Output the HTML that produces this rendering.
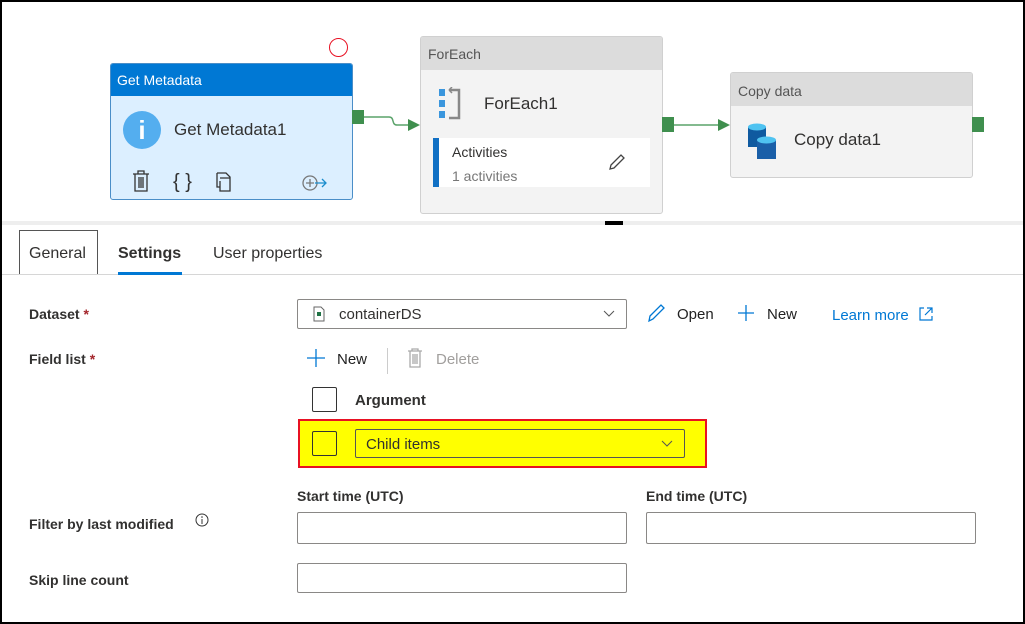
<!DOCTYPE html>
<html><head><style>
*{box-sizing:border-box;margin:0;padding:0}
body{width:1025px;height:624px;position:relative;background:#fff;font-family:"Liberation Sans",sans-serif;color:#323130;overflow:hidden}
.a{position:absolute}
.frame{left:0;top:0;width:1025px;height:624px;border:2px solid #000;z-index:10;pointer-events:none}
.lbl{font-size:14px;font-weight:bold;color:#323130}
.in{border:1px solid #8a8886;border-radius:2px;background:#fff}
</style></head><body>
<div class="a frame"></div>

<div class="a" style="left:329px;top:38px;width:19px;height:19px;border:1.5px solid #e81123;border-radius:50%"></div>

<div class="a" style="left:110px;top:63px;width:243px;height:137px;border:1px solid #4a8ec8;border-radius:3px;background:#dcefff;overflow:hidden">
  <div style="height:32px;background:#0078d4;color:#fff;font-size:14px;padding:8px 6px">Get Metadata</div>
  <div class="a" style="left:12px;top:47px;width:38px;height:38px;border-radius:50%;background:#54aeef;color:#fff;font-weight:bold;font-size:26px;text-align:center;line-height:38px">i</div>
  <div class="a" style="left:63px;top:56px;font-size:17px">Get Metadata1</div>
  <svg class="a" style="left:20px;top:105px" width="200" height="24" fill="none" stroke="#333" stroke-width="1.3">
    <path d="M2 5h16M7 5V2h6v3M4 5v17h12V5M8 8v11M10 8v11M12 8v11"/>
    <text x="42" y="19" font-size="20" fill="#333" stroke="none" font-family="Liberation Sans">{ }</text>
    <path d="M86 4h9l4 4v14h-10V12"/><path d="M86 4v14h3M89 9h10"/>
    <circle cx="179" cy="14" r="7" stroke="#777"/><path d="M175 14h8M179 10v8" stroke="#777"/><path d="M184 14h11M191 10l4 4-4 4" stroke="#1a8ccc"/>
  </svg>
</div>
<div class="a" style="left:352px;top:110px;width:12px;height:14px;background:#3f8f4e"></div>
<svg class="a" style="left:364px;top:110px" width="60" height="25"><path d="M0 7h25c6 0 2 8 8 8h14" stroke="#5aa36a" stroke-width="1.5" fill="none"/><path d="M44 9l12 6-12 6z" fill="#3f8f4e"/></svg>

<div class="a" style="left:420px;top:36px;width:243px;height:178px;border:1px solid #d0d0d0;border-radius:3px;background:#f3f3f3;overflow:hidden">
  <div style="height:33px;background:#dcdcdc;color:#555;font-size:14px;padding:9px 7px">ForEach</div>
  <svg class="a" style="left:16px;top:50px" width="30" height="34"><rect x="2" y="2" width="6" height="7" fill="#3a96dd"/><rect x="2" y="13" width="6" height="7" fill="#3a96dd"/><rect x="2" y="24" width="6" height="7" fill="#3a96dd"/><path d="M13 3h9v28h-10" stroke="#888" stroke-width="2.5" fill="none"/><path d="M12 3l3-3M12 3l3 3" stroke="#888" stroke-width="1.5"/></svg>
  <div class="a" style="left:63px;top:57px;font-size:17px">ForEach1</div>
  <div class="a" style="left:12px;top:101px;width:217px;height:49px;background:#fff;border-left:6px solid #1170c4">
    <div style="position:absolute;left:13px;top:6px;font-size:14px">Activities</div>
    <div style="position:absolute;left:13px;top:30px;font-size:14px;color:#777">1 activities</div>
    <svg style="position:absolute;left:168px;top:14px" width="20" height="20" fill="none" stroke="#444" stroke-width="1.3"><path d="M3 17l1-4 10-10 3 3-10 10z"/></svg>
  </div>
</div>
<div class="a" style="left:662px;top:117px;width:12px;height:15px;background:#3f8f4e"></div>
<svg class="a" style="left:674px;top:115px" width="60" height="20"><path d="M0 10h44" stroke="#5aa36a" stroke-width="1.5"/><path d="M44 4l12 6-12 6z" fill="#3f8f4e"/></svg>

<div class="a" style="left:730px;top:72px;width:243px;height:106px;border:1px solid #d0d0d0;border-radius:3px;background:#f3f3f3;overflow:hidden">
  <div style="height:33px;background:#dcdcdc;color:#555;font-size:14px;padding:10px 7px">Copy data</div>
  <svg class="a" style="left:15px;top:48px" width="36" height="40"><rect x="2" y="6" width="18" height="20" fill="#0f5aa0"/><ellipse cx="11" cy="6" rx="9" ry="3.5" fill="#4fc3f1"/><rect x="11" y="19" width="19" height="19" fill="#1a5fa8"/><ellipse cx="20.5" cy="19" rx="9.5" ry="3.5" fill="#4fc3f1"/></svg>
  <div class="a" style="left:63px;top:57px;font-size:17px">Copy data1</div>
</div>
<div class="a" style="left:972px;top:117px;width:12px;height:15px;background:#3f8f4e"></div>

<div class="a" style="left:2px;top:221px;width:1021px;height:4px;background:#eeeeee"></div>
<div class="a" style="left:605px;top:221px;width:18px;height:4px;background:#000"></div>

<div class="a" style="left:19px;top:230px;width:79px;height:45px;border:1px solid #555"></div>
<div class="a" style="left:2px;top:274px;width:1021px;height:1px;background:#d6d6d6"></div>
<div class="a" style="left:29px;top:245px;font-size:16px">General</div>
<div class="a" style="left:118px;top:245px;font-size:16px;font-weight:bold">Settings</div>
<div class="a" style="left:118px;top:272px;width:64px;height:3px;background:#0078d4"></div>
<div class="a" style="left:213px;top:245px;font-size:16px">User properties</div>

<div class="a lbl" style="left:29px;top:306px">Dataset <span style="color:#a4262c">*</span></div>
<div class="a in" style="left:297px;top:299px;width:330px;height:30px"></div>
<svg class="a" style="left:313px;top:306px" width="12" height="16"><path d="M1 1h7l3 3v11H1z" fill="#fff" stroke="#666"/><rect x="4" y="6" width="4" height="4" fill="#217346"/></svg>
<div class="a" style="left:339px;top:306px;font-size:15px">containerDS</div>
<svg class="a" style="left:603px;top:310px" width="12" height="8"><path d="M1 1l5 5 5-5" stroke="#555" fill="none"/></svg>
<svg class="a" style="left:647px;top:303px" width="20" height="20" fill="none" stroke="#0078d4" stroke-width="1.3"><path d="M2 18l1-5 11-11 3 3-11 11z"/></svg>
<div class="a" style="left:677px;top:306px;font-size:15px;color:#222">Open</div>
<svg class="a" style="left:737px;top:304px" width="18" height="18"><path d="M9 1v16M1 9h16" stroke="#0078d4" stroke-width="1.3"/></svg>
<div class="a" style="left:767px;top:306px;font-size:15px;color:#222">New</div>
<div class="a" style="left:832px;top:307px;font-size:15px;color:#0078d4">Learn more</div>
<svg class="a" style="left:918px;top:306px" width="16" height="16" fill="none" stroke="#0078d4" stroke-width="1.2"><path d="M6 2H2v12h12v-4M9 2h5v5M14 2L7 9"/></svg>

<div class="a lbl" style="left:29px;top:351px">Field list <span style="color:#a4262c">*</span></div>
<svg class="a" style="left:306px;top:348px" width="20" height="20"><path d="M10 1v18M1 10h18" stroke="#0078d4" stroke-width="1.3"/></svg>
<div class="a" style="left:337px;top:351px;font-size:15px;color:#222">New</div>
<div class="a" style="left:387px;top:348px;width:1px;height:26px;background:#ccc"></div>
<svg class="a" style="left:406px;top:347px" width="18" height="22" fill="none" stroke="#aaa" stroke-width="1.3"><path d="M2 4h14M6 4V2h6v2M4 4v16h10V4M7 7v10M9 7v10M11 7v10"/></svg>
<div class="a" style="left:436px;top:351px;font-size:15px;color:#a19f9d">Delete</div>

<div class="a" style="left:312px;top:387px;width:25px;height:25px;border:1px solid #333;border-radius:2px"></div>
<div class="a lbl" style="left:355px;top:392px;font-size:15px">Argument</div>

<div class="a" style="left:298px;top:419px;width:409px;height:49px;border:2px solid #e81123;background:#ffff00"></div>
<div class="a" style="left:312px;top:431px;width:25px;height:25px;border:1px solid #333;border-radius:2px"></div>
<div class="a" style="left:355px;top:429px;width:330px;height:29px;border:1px solid #555;border-radius:2px"></div>
<div class="a" style="left:366px;top:436px;font-size:15px">Child items</div>
<svg class="a" style="left:661px;top:440px" width="12" height="8"><path d="M1 1l5 5 5-5" stroke="#555" fill="none"/></svg>

<div class="a lbl" style="left:297px;top:488px;font-size:14px">Start time (UTC)</div>
<div class="a lbl" style="left:646px;top:488px;font-size:14px">End time (UTC)</div>
<div class="a lbl" style="left:29px;top:516px">Filter by last modified</div>
<svg class="a" style="left:195px;top:513px" width="14" height="14"><circle cx="7" cy="7" r="6" fill="none" stroke="#333"/><path d="M7 6v5" stroke="#333"/><circle cx="7" cy="4" r=".8" fill="#333"/></svg>
<div class="a in" style="left:297px;top:512px;width:330px;height:32px"></div>
<div class="a in" style="left:646px;top:512px;width:330px;height:32px"></div>
<div class="a lbl" style="left:29px;top:572px">Skip line count</div>
<div class="a in" style="left:297px;top:563px;width:330px;height:30px"></div>
</body></html>
